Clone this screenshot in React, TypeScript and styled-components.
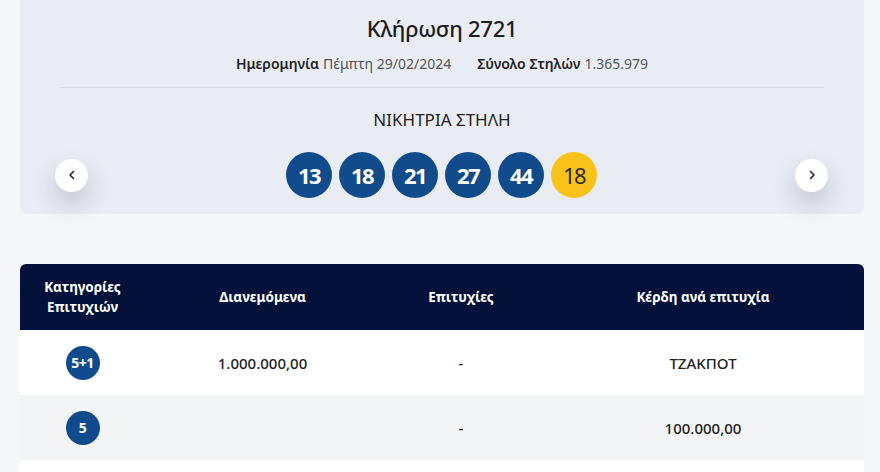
import React from "react"
import styled, { createGlobalStyle } from "styled-components"

const GlobalStyle = createGlobalStyle`
  body {
    margin: 0;
    background: #f5f6f9;
    font-family: "Noto Sans", "DejaVu Sans", sans-serif;
    color: #222;
  }
`

const Page = styled.div`
  padding: 0 16px 0 20px;
`

const DrawCard = styled.section`
  background: #e9ecf3;
  border-radius: 0 0 8px 8px;
  padding: 11px 0 16px;
`

const Title = styled.h1`
  margin: 0;
  text-align: center;
  font-size: 22px;
  font-weight: 500;
  letter-spacing: -0.3px;
  line-height: 34px;
  color: #1d1d1f;
`

const Meta = styled.div`
  display: flex;
  justify-content: center;
  gap: 26px;
  margin-top: 9px;
  font-size: 14px;
  line-height: 20px;
`

const MetaItem = styled.span`
  color: #555;

  b {
    color: #222;
    font-weight: 600;
    margin-right: 4px;
  }
`

const Divider = styled.hr`
  border: none;
  border-top: 1px solid #d6dae3;
  margin: 13px 40px 0;
`

const Subtitle = styled.h2`
  margin: 21px 0 0;
  text-align: center;
  font-size: 17px;
  font-weight: 400;
  line-height: 22px;
  color: #222;
`

const BallsRow = styled.div`
  display: flex;
  align-items: center;
  justify-content: space-between;
  padding: 0 36px 0 35px;
  margin-top: 21px;
`

const Balls = styled.div`
  display: flex;
  gap: 7px;
`

const Ball = styled.span<{ $bonus?: boolean }>`
  width: 46px;
  height: 46px;
  border-radius: 50%;
  display: flex;
  align-items: center;
  justify-content: center;
  background: ${ p => p.$bonus ? "#f8c21b" : "#124b8b" };
  color: ${ p => p.$bonus ? "#2b2b2b" : "#fff" };
  font-size: 22px;
  font-weight: ${ p => p.$bonus ? 400 : 700 };
  letter-spacing: -1.5px;
`

const NavButton = styled.button`
  width: 33px;
  height: 33px;
  border-radius: 50%;
  border: none;
  background: #fff;
  box-shadow: 0 12px 24px rgba(40, 50, 90, 0.22);
  display: flex;
  align-items: center;
  justify-content: center;
  padding: 0;
  cursor: pointer;
`

const Table = styled.div`
  margin-top: 50px;
  border-radius: 6px 6px 0 0;
  overflow: hidden;
`

const Row = styled.div<{ $head?: boolean, $alt?: boolean }>`
  display: grid;
  grid-template-columns: 125px 235px 162px 1fr;
  align-items: center;
  height: ${ p => p.$head ? 66 : 65 }px;
  background: ${ p => p.$head ? "#03113b" : p.$alt ? "#f3f4f6" : "#fff" };
  color: ${ p => p.$head ? "#fff" : "#222" };
  font-size: ${ p => p.$head ? 13.5 : 15 }px;
  font-weight: ${ p => p.$head ? 700 : 500 };
  line-height: 20px;
`

const Cell = styled.div`
  display: flex;
  justify-content: center;
  text-align: center;
`

const Category = styled.span`
  width: 34px;
  height: 34px;
  border-radius: 50%;
  background: #124b8b;
  color: #fff;
  font-size: 14px;
  font-weight: 700;
  display: flex;
  align-items: center;
  justify-content: center;
  letter-spacing: -0.5px;
`

const Chevron = ({ dir }: { dir: "left" | "right" }) => (
  <svg width="12" height="12" viewBox="0 0 12 12" fill="none" stroke="#222" strokeWidth="1.6" strokeLinecap="round" strokeLinejoin="round">
    { dir === "left" ? <path d="M7.5 2.5 4 6l3.5 3.5" /> : <path d="M4.5 2.5 8 6 4.5 9.5" /> }
  </svg>
)

const numbers = [13, 18, 21, 27, 44]

// the third row is only the start of the next (white) row, its content lies below the fold
const rows = [
  { cat: "5+1", amount: "1.000.000,00", wins: "-", prize: "ΤΖΑΚΠΟΤ" },
  { cat: "5", amount: "", wins: "-", prize: "100.000,00" },
  { cat: "", amount: "", wins: "", prize: "" },
]

const App = () => {
  return (
    <Page>
      <GlobalStyle />
      <DrawCard>
        <Title>Κλήρωση 2721</Title>
        <Meta>
          <MetaItem><b>Ημερομηνία</b>Πέμπτη 29/02/2024</MetaItem>
          <MetaItem><b>Σύνολο Στηλών</b>1.365.979</MetaItem>
        </Meta>
        <Divider />
        <Subtitle>ΝΙΚΗΤΡΙΑ ΣΤΗΛΗ</Subtitle>
        <BallsRow>
          <NavButton title="Προηγούμενη"><Chevron dir="left" /></NavButton>
          <Balls>
            { numbers.map((n, i) => <Ball key={ i }>{ n }</Ball>) }
            <Ball $bonus>18</Ball>
          </Balls>
          <NavButton title="Επόμενη"><Chevron dir="right" /></NavButton>
        </BallsRow>
      </DrawCard>

      <Table>
        <Row $head>
          <Cell>Κατηγορίες<br />Επιτυχιών</Cell>
          <Cell>Διανεμόμενα</Cell>
          <Cell>Επιτυχίες</Cell>
          <Cell>Κέρδη ανά επιτυχία</Cell>
        </Row>
        { rows.map((r, i) => (
          <Row key={ i } $alt={ i % 2 === 1 }>
            <Cell>{ r.cat && <Category>{ r.cat }</Category> }</Cell>
            <Cell>{ r.amount }</Cell>
            <Cell>{ r.wins }</Cell>
            <Cell>{ r.prize }</Cell>
          </Row>
        )) }
      </Table>
    </Page>
  )
}

export default App
